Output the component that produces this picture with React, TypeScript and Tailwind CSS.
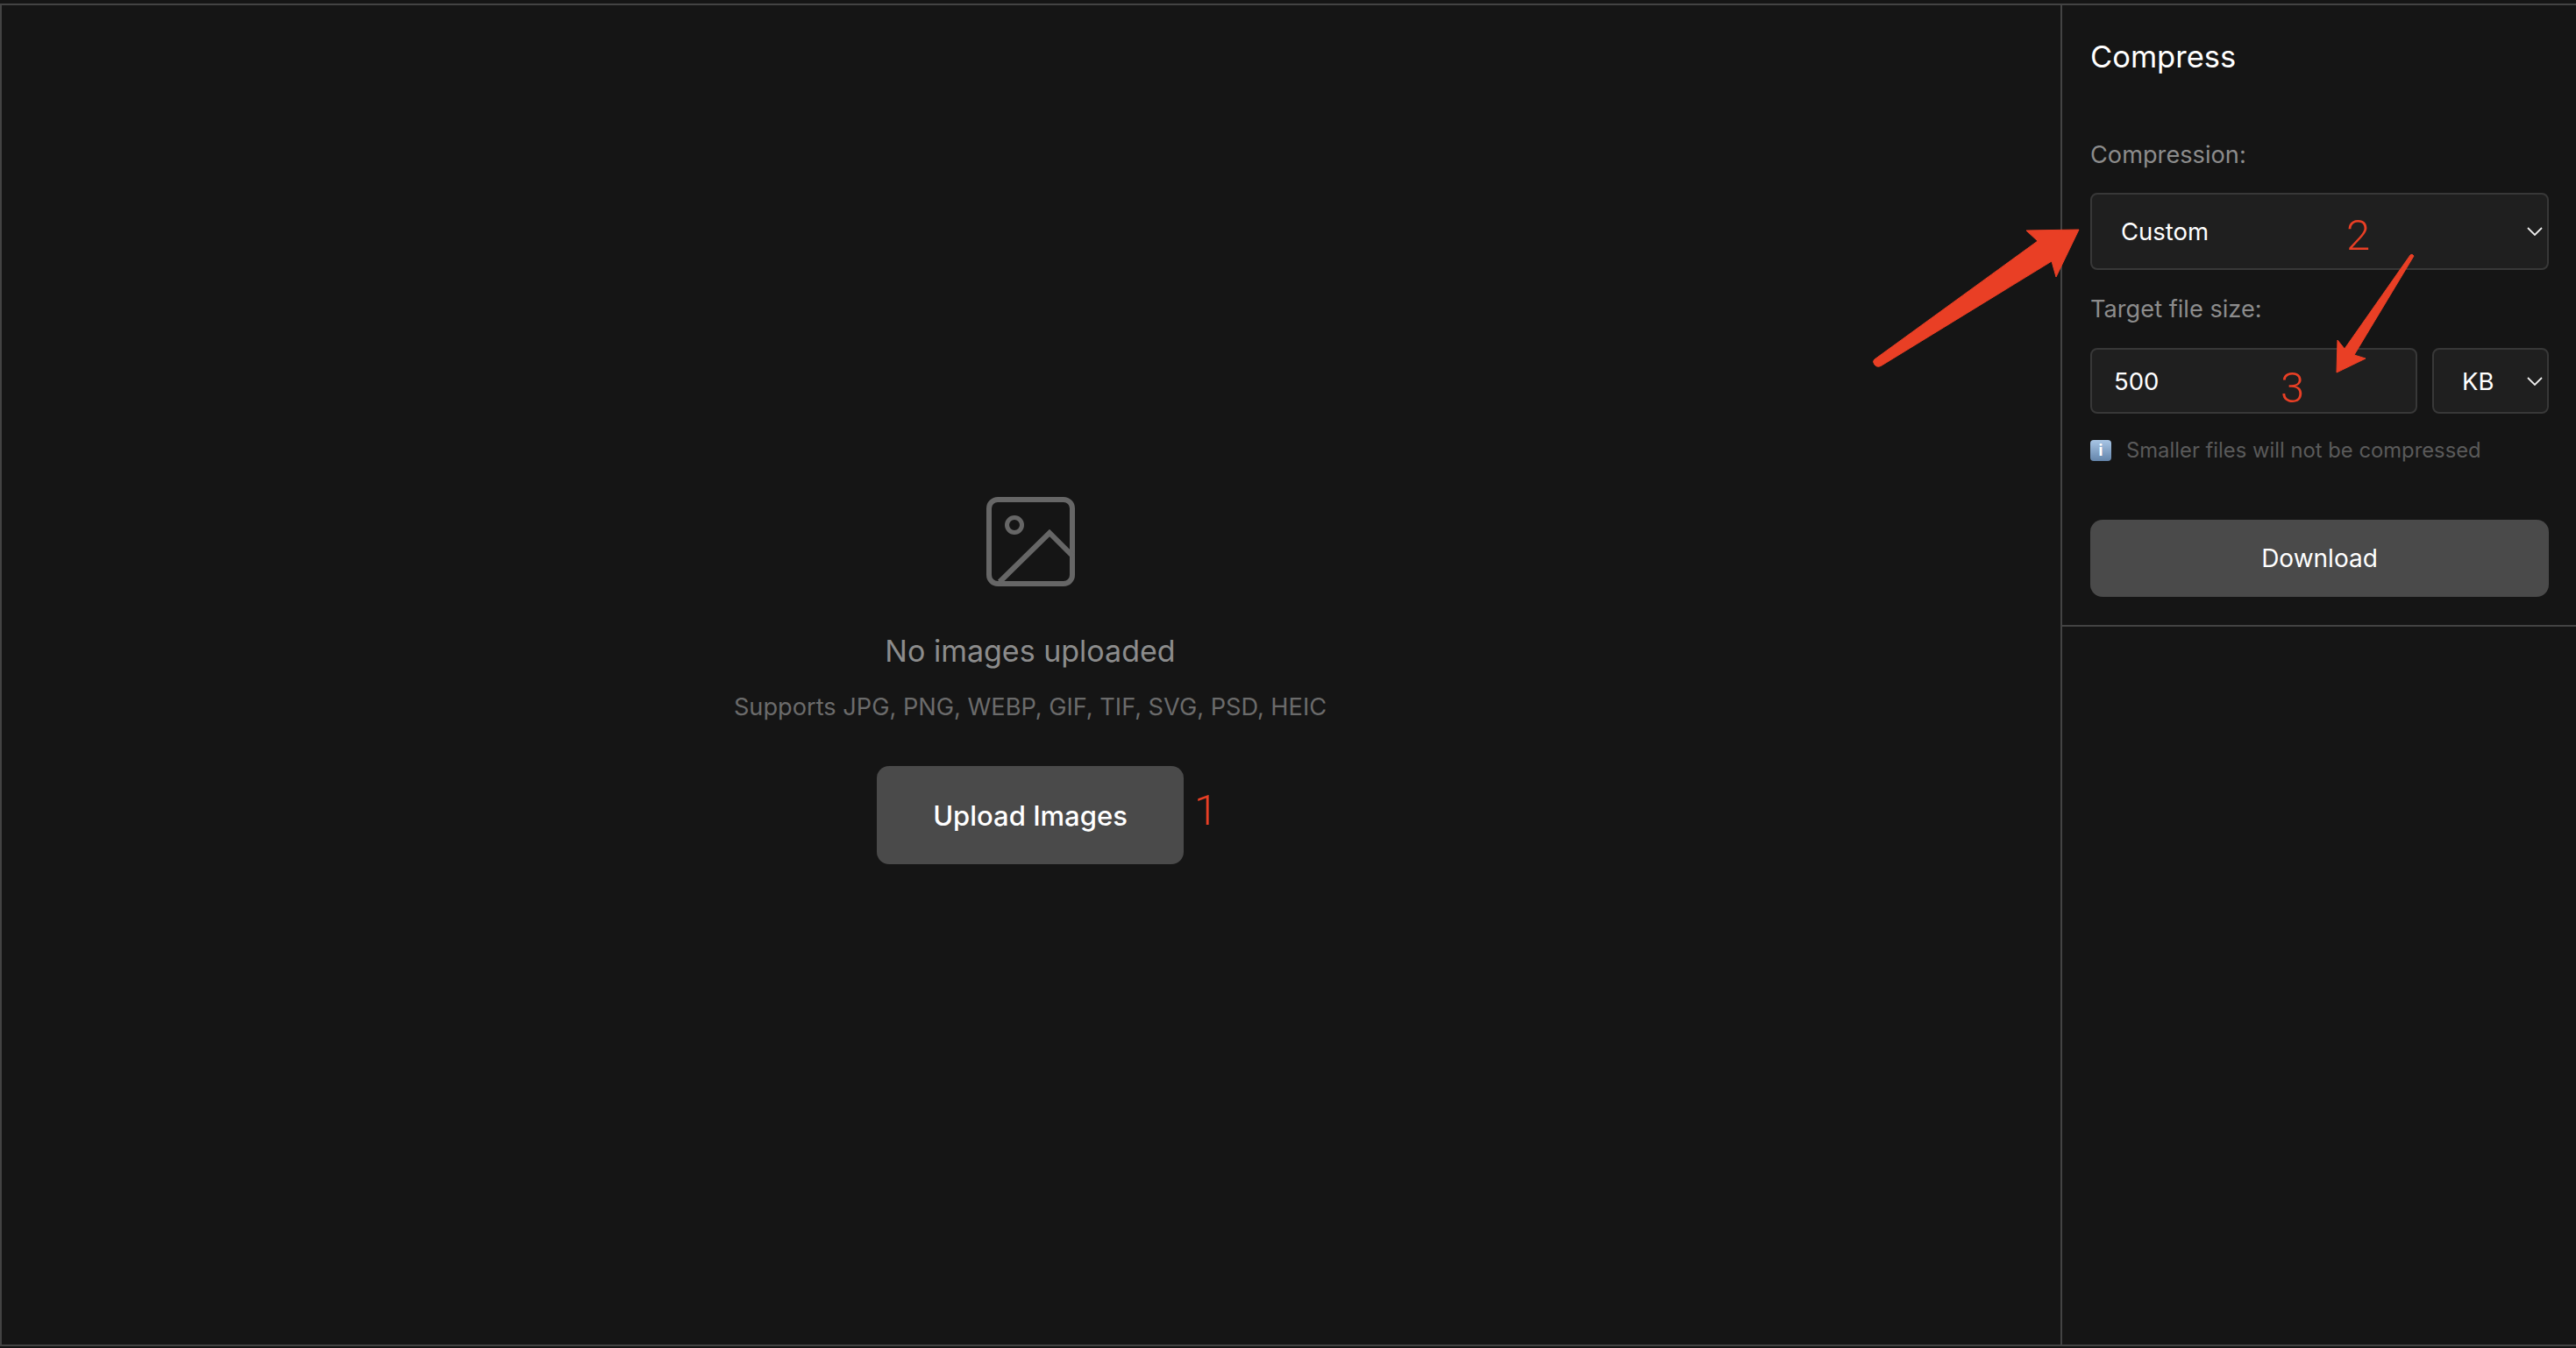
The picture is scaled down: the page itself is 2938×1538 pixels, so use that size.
const FONT = "font-['Inter','Liberation_Sans',sans-serif]";

function Chevron() {
  return (
    <svg viewBox="0 0 18 10" className="h-[10px] w-[18px]" fill="none" stroke="#ececec" strokeWidth="1.8">
      <path d="M1 1l8 8 8-8" />
    </svg>
  );
}

function ImageIcon() {
  return (
    <svg viewBox="0 0 101 102" className="h-[102px] w-[101px]" fill="none" stroke="#666666" strokeWidth="6">
      <rect x="3" y="3" width="95" height="96" rx="10" />
      <circle cx="32" cy="32" r="8.5" strokeWidth="5" />
      <path d="M15 97L72 41l27 27" strokeLinejoin="miter" />
    </svg>
  );
}

function Annotations() {
  return (
    <>
      <svg viewBox="0 0 2938 1538" className="pointer-events-none absolute inset-0 h-[1538px] w-[2938px]">
        <path
          fill="#e93f25"
          stroke="#e93f25"
          strokeLinejoin="round"
          d="M2138 410L2324 275L2311 263L2371 262L2345 316L2340 298L2146 417Q2141 420 2138 416Q2135 412 2138 410Z"
        />
        <path
          fill="#e93f25"
          stroke="#e93f25"
          strokeLinejoin="round"
          d="M2749 291Q2751 289 2753 292L2685 405L2698 409L2665 425L2666 388L2674 398Z"
        />
      </svg>
      <span className="absolute left-[1362px] top-[898px] font-['Roboto',sans-serif] text-[49px] leading-[54px] font-light text-[#e93f25]">
        1
      </span>
      <span className="absolute left-[2676px] top-[242px] font-['Roboto',sans-serif] text-[49px] leading-[54px] font-light text-[#e93f25]">
        2
      </span>
      <span className="absolute left-[2601px] top-[416px] font-['Roboto',sans-serif] text-[49px] leading-[54px] font-light text-[#e93f25]">
        3
      </span>
    </>
  );
}

export default function App() {
  return (
    <div className={`relative h-[1538px] w-[2938px] overflow-hidden bg-[#151515] pt-[4px] pb-[2px] ${FONT}`}>
      <div className="flex h-full border-y-2 border-l-2 border-[#434343]">
        <main className="flex flex-1 flex-col items-center justify-center pt-[13px] pr-[2px]">
          <ImageIcon />
          <h2 className="mt-[52px] text-[34px] leading-[44px] text-[#8c8c8c]">No images uploaded</h2>
          <p className="mt-[24px] text-[27.2px] leading-[36px] text-[#6b6b6b]">
            Supports JPG, PNG, WEBP, GIF, TIF, SVG, PSD, HEIC
          </p>
          <button
            type="button"
            className="mt-[49px] h-[112px] w-[350px] rounded-[14px] bg-[#4a4a4a] pt-[2px] text-[31px] font-medium text-white"
          >
            Upload Images
          </button>
        </main>

        <aside className="w-[588px] border-l-2 border-[#434343]">
          <div className="border-b-2 border-[#434343] pt-[37px] pr-[31px] pb-[32px] pl-[32px]">
            <h1 className="text-[34.5px] leading-[44px] text-white">Compress</h1>

            <label className="mt-[72px] block text-[27.2px] leading-[36px] text-[#8c8c8c]">Compression:</label>
            <button
              type="button"
              className="mt-[25px] flex h-[88px] w-full items-center justify-between rounded-[8px] border-2 border-[#383838] bg-[#1f1f1f] pr-[5px] pl-[33px] text-[27.5px] text-white"
            >
              <span className="pt-[2px]">Custom</span>
              <Chevron />
            </button>

            <label className="mt-[27px] block text-[27.2px] leading-[36px] text-[#8c8c8c]">Target file size:</label>
            <div className="mt-[26px] flex gap-[17px]">
              <input
                readOnly
                value="500"
                className="h-[75px] w-[373px] rounded-[8px] border-2 border-[#383838] bg-[#1f1f1f] pt-[1px] pl-[25px] text-[27.5px] text-white outline-none"
              />
              <button
                type="button"
                className="flex h-[75px] flex-1 items-center justify-between rounded-[8px] border-2 border-[#383838] bg-[#1f1f1f] pr-[5px] pl-[32px] text-[27.5px] text-white"
              >
                <span className="pt-[2px]">KB</span>
                <Chevron />
              </button>
            </div>

            <div className="mt-[30px] flex items-center gap-[17px]">
              <span className="flex h-[24px] w-[24px] items-center justify-center rounded-[4px] bg-gradient-to-b from-[#a9c6e6] to-[#6485ab] text-[18px] leading-none font-bold text-white">
                i
              </span>
              <span className="text-[23.8px] leading-[24px] text-[#5a5a5a]">Smaller files will not be compressed</span>
            </div>

            <button
              type="button"
              className="mt-[67px] h-[88px] w-full rounded-[14px] bg-[#4a4a4a] text-[28px] text-white"
            >
              Download
            </button>
          </div>
        </aside>
      </div>
      <Annotations />
    </div>
  );
}
